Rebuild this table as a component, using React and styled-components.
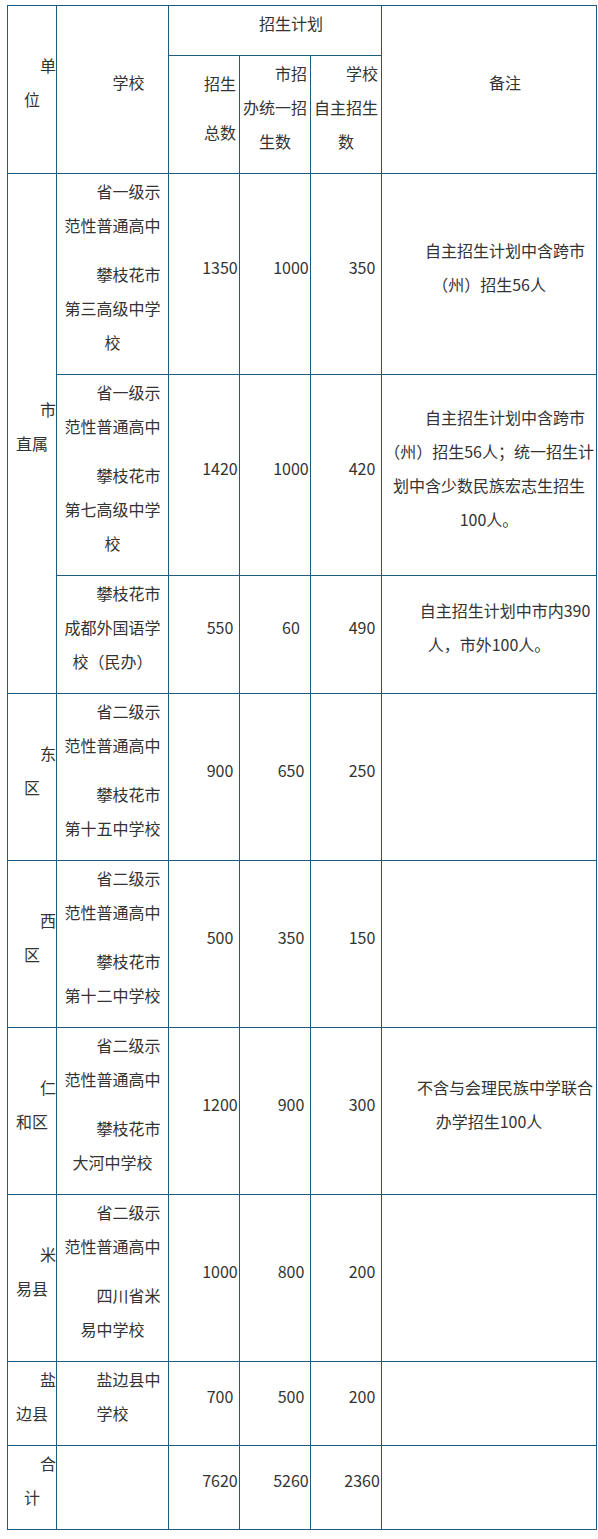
import React from "react";
import styled, { createGlobalStyle } from "styled-components";

const Global = createGlobalStyle`
  html, body { margin: 0; padding: 0; background: #fff; }
  body { font-family: "Noto Sans CJK SC", "Noto Sans", sans-serif; color: #333; }
`;

const Page = styled.div`
  padding: 5px 0 0 7px;
`;

const Table = styled.table`
  border-collapse: collapse;
  table-layout: fixed;
  width: 589px;
  font-size: 16px;
`;

const Cell = styled.td`
  border: 1px solid #1d5a7d;
  padding: 0;
  text-align: center;
  vertical-align: middle;
  color: #333;
  word-break: normal;
`;

const Para = styled.p`
  margin: 0 0 15px;
  line-height: 34px;
  text-indent: 2em;
  white-space: normal;
`;

const Text = ({ lines }) =>
  lines.map((l, i) => <Para key={i}>{l}</Para>);

const rows = [
  {
    unit: "市直属",
    span: 3,
    school: ["省一级示范性普通高中", "攀枝花市第三高级中学校"],
    nums: ["1350", "1000", "350"],
    note: "自主招生计划中含跨市（州）招生56人",
  },
  {
    school: ["省一级示范性普通高中", "攀枝花市第七高级中学校"],
    nums: ["1420", "1000", "420"],
    note: "自主招生计划中含跨市（州）招生56人；统一招生计划中含少数民族宏志生招生100人。",
  },
  {
    school: ["攀枝花市成都外国语学校（民办）"],
    nums: ["550", "60", "490"],
    note: "自主招生计划中市内390人，市外100人。",
  },
  {
    unit: "东区",
    school: ["省二级示范性普通高中", "攀枝花市第十五中学校"],
    nums: ["900", "650", "250"],
  },
  {
    unit: "西区",
    school: ["省二级示范性普通高中", "攀枝花市第十二中学校"],
    nums: ["500", "350", "150"],
  },
  {
    unit: "仁和区",
    school: ["省二级示范性普通高中", "攀枝花市大河中学校"],
    nums: ["1200", "900", "300"],
    note: "不含与会理民族中学联合办学招生100人",
  },
  {
    unit: "米易县",
    school: ["省二级示范性普通高中", "四川省米易中学校"],
    nums: ["1000", "800", "200"],
  },
  {
    unit: "盐边县",
    school: ["盐边县中学校"],
    nums: ["700", "500", "200"],
  },
  {
    unit: "合计",
    school: [],
    nums: ["7620", "5260", "2360"],
  },
];

export default function App() {
  return (
    <Page>
      <Global />
      <Table>
        <colgroup>
          <col style={{ width: 49 }} />
          <col style={{ width: 112 }} />
          <col style={{ width: 71 }} />
          <col style={{ width: 71 }} />
          <col style={{ width: 71 }} />
          <col style={{ width: 215 }} />
        </colgroup>
        <tbody>
          <tr>
            <Cell rowSpan={2}><Text lines={["单位"]} /></Cell>
            <Cell rowSpan={2}><Text lines={["学校"]} /></Cell>
            <Cell colSpan={3}><Text lines={["招生计划"]} /></Cell>
            <Cell rowSpan={2}><Text lines={["备注"]} /></Cell>
          </tr>
          <tr>
            <Cell><Text lines={["招生", "总数"]} /></Cell>
            <Cell><Text lines={["市招办统一招生数"]} /></Cell>
            <Cell><Text lines={["学校自主招生数"]} /></Cell>
          </tr>
          {rows.map((r, i) => (
            <tr key={i}>
              {r.unit && (
                <Cell rowSpan={r.span || 1}><Text lines={[r.unit]} /></Cell>
              )}
              <Cell><Text lines={r.school} /></Cell>
              {r.nums.map((n, j) => (
                <Cell key={j}><Text lines={[n]} /></Cell>
              ))}
              <Cell>{r.note ? <Text lines={[r.note]} /> : null}</Cell>
            </tr>
          ))}
        </tbody>
      </Table>
    </Page>
  );
}
